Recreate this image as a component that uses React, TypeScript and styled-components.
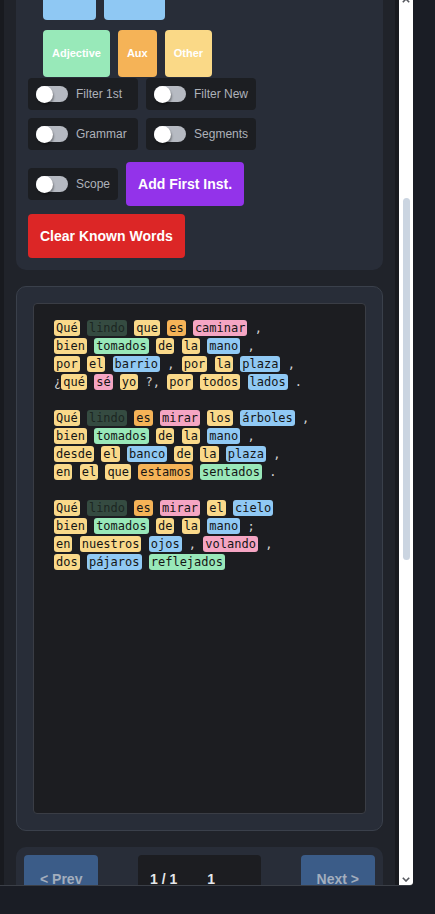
import React, { useLayoutEffect, useRef, useState } from "react";
import styled, { createGlobalStyle } from "styled-components";

type Kind = "o" | "k" | "a" | "v" | "j" | "n";

const Global = createGlobalStyle`
  html { overflow: hidden; background: #1a1d25; }
  body {
    margin: 0;
    background: #1a1d25;
    font-family: "Liberation Sans", Arial, sans-serif;
  }
`;

const Page = styled.div`
  padding-bottom: 28px;
`;

const Frame = styled.div`
  display: flex;
  width: 413px;
  height: 896px;
  box-sizing: border-box;
  background: #181a1f;
  border-bottom: 1px solid #3b3f47;
  border-bottom-right-radius: 4px;
`;

const Scroller = styled.div`
  flex: 1;
  min-width: 0;
  overflow-y: auto;
  scrollbar-width: none;
`;

const Rail = styled.div`
  position: relative;
  flex: none;
  width: 14px;
  background: #ffffff;
  border-bottom-right-radius: 3px;
`;

const RailArrow = styled.svg<{ $pos: "top" | "bottom" }>`
  position: absolute;
  left: 3px;
  width: 8px;
  height: 5px;
  ${(p) => (p.$pos === "top" ? "top: 8px;" : "bottom: 3px;")}
`;

const Thumb = styled.div`
  position: absolute;
  left: 4px;
  width: 7px;
  border-radius: 4px;
  background: #cbd5e1;
`;

const Column = styled.main`
  margin: 0 4px;
  background: #20232a;
  padding: 16px 12px;
  display: flex;
  flex-direction: column;
  gap: 16px;
`;

const Card = styled.section<{ $pad?: number; $border?: boolean }>`
  background: #282d38;
  border-radius: 10px;
  padding: ${(p) => p.$pad ?? 12}px;
  border: ${(p) => (p.$border ? "1px solid #3a404b" : "none")};
`;

const Title = styled.h1`
  margin: 0 0 10px;
  font-size: 18px;
  color: #e5e7eb;
`;

const SourceArea = styled.div`
  height: 259px;
  background: #1c1d21;
  border: 1px solid #3a3d45;
  border-radius: 4px;
  padding: 10px;
  color: #9ca3af;
  font-size: 12px;
`;

const SectionLabel = styled.h2`
  margin: 0 0 10px 15px;
  font-size: 13px;
  color: #c4c8cf;
  font-weight: 600;
`;

const ColorBlock = styled.div`
  display: flex;
  flex-direction: column;
  gap: 10px;
  padding-left: 15px;
  margin-bottom: 1px;
`;

const ColorRow = styled.div`
  display: flex;
  gap: 8px;
`;

const colorMap: Record<string, string> = {
  verb: "#f5a5c3",
  known: "#354b41",
  noun: "#8fc8f3",
  adj: "#98e9b9",
  aux: "#f5b357",
  other: "#fad987",
};

const ColorButton = styled.button<{ $c: string }>`
  border: none;
  border-radius: 4px;
  background: ${(p) => colorMap[p.$c]};
  color: #ffffff;
  font-family: "Liberation Sans", Arial, sans-serif;
  font-size: 11px;
  font-weight: 700;
  line-height: 15px;
  padding: 16px 9px;
`;

const Controls = styled.div`
  display: flex;
  flex-direction: column;
  align-items: flex-start;
  gap: 8px;
`;

const ToggleGrid = styled.div`
  display: inline-grid;
  grid-template-columns: repeat(2, 1fr);
  gap: 8px;
`;

const ActionRow = styled.div<{ $top?: number }>`
  display: flex;
  align-items: center;
  gap: 8px;
  margin-top: ${(p) => p.$top ?? 0}px;
`;

const Pill = styled.label`
  display: flex;
  align-items: center;
  gap: 8px;
  padding: 8px;
  background: #1c1e22;
  border-radius: 4px;
  font-size: 12px;
  line-height: 16px;
  color: #aeb2ba;
`;

const Track = styled.span`
  position: relative;
  flex: none;
  width: 32px;
  height: 16px;
  border-radius: 8px;
  background: #b6bac2;
`;

const Knob = styled.span`
  position: absolute;
  left: 0;
  top: 0;
  width: 17px;
  height: 17px;
  border-radius: 50%;
  background: #ffffff;
  box-shadow: 1px 2px 2px rgba(0, 0, 0, 0.35);
`;

const ActionButton = styled.button<{ $bg: string }>`
  border: none;
  border-radius: 4px;
  background: ${(p) => p.$bg};
  color: #ffffff;
  font-family: "Liberation Sans", Arial, sans-serif;
  font-size: 14px;
  font-weight: 700;
  line-height: 16px;
  padding: 14px 12px;
`;

const TextBox = styled.div`
  height: 511px;
  box-sizing: border-box;
  background: #1c1d21;
  border: 1px solid #3a3d45;
  border-radius: 4px;
  padding: 15px 20px;
  font-family: "DejaVu Sans Mono", "Liberation Mono", monospace;
  font-size: 12px;
  line-height: 18px;
  color: #d4d4d4;
  display: flex;
  flex-direction: column;
  gap: 18px;
`;

const Stanza = styled.div``;

const Line = styled.div`
  white-space: nowrap;
`;

const wordBg: Record<Kind, string> = {
  o: "#fad98a",
  k: "#354b41",
  a: "#f5b357",
  v: "#f5a5c3",
  j: "#99e8b9",
  n: "#90c9f4",
};

const Word = styled.span<{ $k: Kind }>`
  background: ${(p) => wordBg[p.$k]};
  color: ${(p) => (p.$k === "k" ? "#1c2621" : "#151515")};
  border-radius: 3px;
  padding: 1px 2px;
`;

const Punct = styled.span`
  color: #d4d4d4;
`;

const Pager = styled.div`
  display: flex;
  justify-content: space-between;
  align-items: flex-start;
`;

const PageButton = styled.button`
  border: none;
  border-radius: 4px;
  background: #3b5c88;
  color: #a3aebd;
  font-family: "Liberation Sans", Arial, sans-serif;
  font-size: 14px;
  font-weight: 700;
  line-height: 16px;
  padding: 16px;
`;

const PageBox = styled.div`
  display: flex;
  align-items: center;
  gap: 12px;
  width: 123px;
  box-sizing: border-box;
  padding: 16px 12px;
  background: #1c1d21;
  border-radius: 4px;
  color: #e5e7eb;
  font-size: 14px;
  font-weight: 700;
  line-height: 16px;
`;

const PageInput = styled.span`
  width: 44px;
  text-align: center;
`;

const Filler = styled.div`
  height: 687px;
  color: #9ca3af;
  font-size: 12px;
`;

const poem: string[][] = [
  [
    "Qué:o lindo:k que:o es:a caminar:v ,",
    "bien:o tomados:j de:o la:o mano:n ,",
    "por:o el:o barrio:n , por:o la:o plaza:n ,",
    "¿|qué:o sé:v yo:o ?, por:o todos:o lados:n .",
  ],
  [
    "Qué:o lindo:k es:a mirar:v los:o árboles:n ,",
    "bien:o tomados:j de:o la:o mano:n ,",
    "desde:o el:o banco:n de:o la:o plaza:n ,",
    "en:o el:o que:o estamos:a sentados:j .",
  ],
  [
    "Qué:o lindo:k es:a mirar:v el:o cielo:n",
    "bien:o tomados:j de:o la:o mano:n ;",
    "en:o nuestros:o ojos:n , volando:v ,",
    "dos:o pájaros:n reflejados:j",
  ],
];

function renderToken(t: string, key: number) {
  const [text, kind] = t.split(":");
  return kind ? (
    <Word key={key} $k={kind as Kind}>
      {text}
    </Word>
  ) : (
    <Punct key={key}>{text}</Punct>
  );
}

function renderLine(line: string) {
  return line.split(" ").map((t, i) => (
    <React.Fragment key={i}>
      {i > 0 ? " " : null}
      {t.split("|").map((part, j) => renderToken(part, j))}
    </React.Fragment>
  ));
}

function Toggle({ label }: { label: string }) {
  return (
    <Pill>
      <Track>
        <Knob />
      </Track>
      {label}
    </Pill>
  );
}

const ARROW = 14;

export default function App() {
  const frameRef = useRef<HTMLDivElement>(null);
  const anchorRef = useRef<HTMLElement>(null);
  const [thumb, setThumb] = useState({ top: ARROW, height: 0 });

  useLayoutEffect(() => {
    window.scrollTo(0, 10);
    const f = frameRef.current;
    const a = anchorRef.current;
    if (f && a) {
      f.scrollTop += a.getBoundingClientRect().top - 286;
      const track = f.clientHeight - ARROW * 2;
      const h = (f.clientHeight / f.scrollHeight) * track;
      const top = ARROW + (f.scrollTop / f.scrollHeight) * track;
      setThumb({ top, height: h });
    }
  }, []);

  return (
    <Page>
      <Global />
      <Frame>
        <Scroller ref={frameRef}>
          <Column>
            <Card>
              <Title>Spanish Reader</Title>
              <SourceArea>Paste a text to analyse…</SourceArea>
            </Card>
            <Card>
              <SectionLabel>Word Types</SectionLabel>
              <ColorBlock>
                <ColorRow>
                  <ColorButton $c="verb">Verb</ColorButton>
                  <ColorButton $c="known">Known</ColorButton>
                </ColorRow>
                <ColorRow>
                  <ColorButton $c="noun">Places</ColorButton>
                  <ColorButton $c="noun">Persons</ColorButton>
                </ColorRow>
                <ColorRow>
                  <ColorButton $c="adj">Adjective</ColorButton>
                  <ColorButton $c="aux">Aux</ColorButton>
                  <ColorButton $c="other">Other</ColorButton>
                </ColorRow>
              </ColorBlock>
              <Controls>
                <ToggleGrid>
                  <Toggle label="Filter 1st" />
                  <Toggle label="Filter New" />
                  <Toggle label="Grammar" />
                  <Toggle label="Segments" />
                </ToggleGrid>
                <ActionRow $top={4}>
                  <Toggle label="Scope" />
                  <ActionButton $bg="#9333ea">Add First Inst.</ActionButton>
                </ActionRow>
                <ActionRow>
                  <ActionButton $bg="#dc2626">Clear Known Words</ActionButton>
                </ActionRow>
              </Controls>
            </Card>
            <Card $pad={16} $border ref={anchorRef}>
              <TextBox>
                {poem.map((st, i) => (
                  <Stanza key={i}>
                    {st.map((l, j) => (
                      <Line key={j}>{renderLine(l)}</Line>
                    ))}
                  </Stanza>
                ))}
              </TextBox>
            </Card>
            <Card $pad={8}>
              <Pager>
                <PageButton>&lt; Prev</PageButton>
                <PageBox>
                  <span>1 / 1</span>
                  <PageInput>1</PageInput>
                </PageBox>
                <PageButton>Next &gt;</PageButton>
              </Pager>
            </Card>
            <Card>
              <Filler>Known words: lindo</Filler>
            </Card>
          </Column>
        </Scroller>
        <Rail>
          <RailArrow $pos="top" viewBox="0 0 8 5">
            <path d="M0.8 4.2 L4 1 L7.2 4.2" fill="none" stroke="#55585e" strokeWidth="1.6" />
          </RailArrow>
          <Thumb style={{ top: thumb.top, height: thumb.height }} />
          <RailArrow $pos="bottom" viewBox="0 0 8 5">
            <path d="M0.8 0.8 L4 4 L7.2 0.8" fill="none" stroke="#55585e" strokeWidth="1.6" />
          </RailArrow>
        </Rail>
      </Frame>
    </Page>
  );
}
